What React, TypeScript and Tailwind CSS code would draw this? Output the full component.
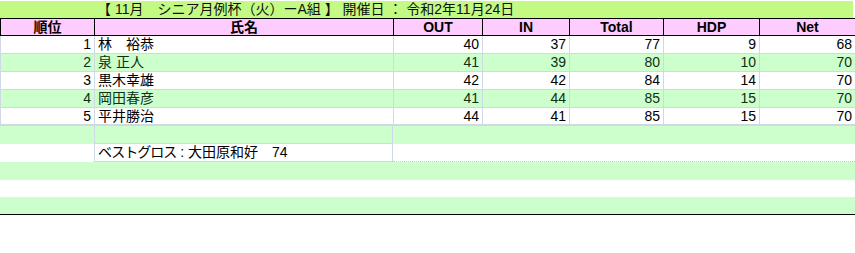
const cols = "grid grid-cols-[94px_299px_89px_87px_94px_96px_96px]";

const headers = ["順位", "氏名", "OUT", "IN", "Total", "HDP", "Net"];

const rows = [
  { rank: 1, name: "林　裕恭", out: 40, inn: 37, total: 77, hdp: 9, net: 68 },
  { rank: 2, name: "泉 正人", out: 41, inn: 39, total: 80, hdp: 10, net: 70 },
  { rank: 3, name: "黒木幸雄", out: 42, inn: 42, total: 84, hdp: 14, net: 70 },
  { rank: 4, name: "岡田春彦", out: 41, inn: 44, total: 85, hdp: 15, net: 70 },
  { rank: 5, name: "平井勝治", out: 44, inn: 41, total: 85, hdp: 15, net: 70 },
];

const font = "font-['Liberation_Sans','Noto_Sans_CJK_JP',sans-serif]";

export default function App() {
  return (
    <div className={`w-[855px] h-[253px] bg-white text-black ${font}`}>
      {/* title */}
      <div className={`${cols} h-[18px] mt-px mr-[2px] bg-[#c2fa84]`}>
        <div />
        <div className="col-span-6 pl-[3px] text-[14px] leading-[17px] whitespace-pre text-[#111]">
          【 11月　シニア月例杯（火）ーA組 】 開催日 ： 令和2年11月24日
        </div>
      </div>

      {/* header */}
      <div className={`${cols} h-[18px] border-y border-l border-black bg-[#ffccff] -mt-px`}>
        {headers.map((h) => (
          <div
            key={h}
            className="border-r border-black text-center text-[14px] font-bold leading-[16px]"
          >
            {h}
          </div>
        ))}
      </div>

      {/* results */}
      {rows.map((r, i) => {
        const green = i % 2 === 1;
        const bg = green ? "bg-[#ccffcc] text-[#0f2f14]" : "bg-white";
        const last = i === rows.length - 1;
        return (
          <div
            key={r.rank}
            className={`${cols} h-[18px] border-l border-[#d0d7e5] ${bg} ${
              last ? "border-b-2" : "border-b"
            } text-[14px] leading-[17px]`}
          >
            <div className="border-r border-[#d0d7e5] text-right pr-[3px]">{r.rank}</div>
            <div className="border-r border-[#d0d7e5] pl-[3px] whitespace-pre">{r.name}</div>
            <div className="border-r border-[#d0d7e5] text-right pr-[3px]">{r.out}</div>
            <div className="border-r border-[#d0d7e5] text-right pr-[3px]">{r.inn}</div>
            <div className="border-r border-[#d0d7e5] text-right pr-[3px]">{r.total}</div>
            <div className="border-r border-[#d0d7e5] text-right pr-[3px]">{r.hdp}</div>
            <div className="border-r border-[#d0d7e5] text-right pr-[3px]">{r.net}</div>
          </div>
        );
      })}

      {/* blank + best gross */}
      <div className={`${cols} h-[18px] bg-[#ccffcc]`}>
        <div />
        <div className="border-x border-b border-[#d0d7e5]" />
      </div>
      <div className={`${cols} h-[18px] text-[14px] leading-[17px]`}>
        <div />
        <div className="border-x border-b border-[#d0d7e5] pl-[3px] whitespace-pre">
          <span className="tracking-[-1px]">ベストグロス</span> : 大田原和好　74
        </div>
        <div className="col-span-5 border-b border-dotted border-[#c8c8c8]" />
      </div>
      <div className="h-[18px] bg-[#ccffcc]" />
      <div className="h-[17px]" />
      <div className="h-[18px] bg-[#ccffcc] border-b border-black" />
    </div>
  );
}
